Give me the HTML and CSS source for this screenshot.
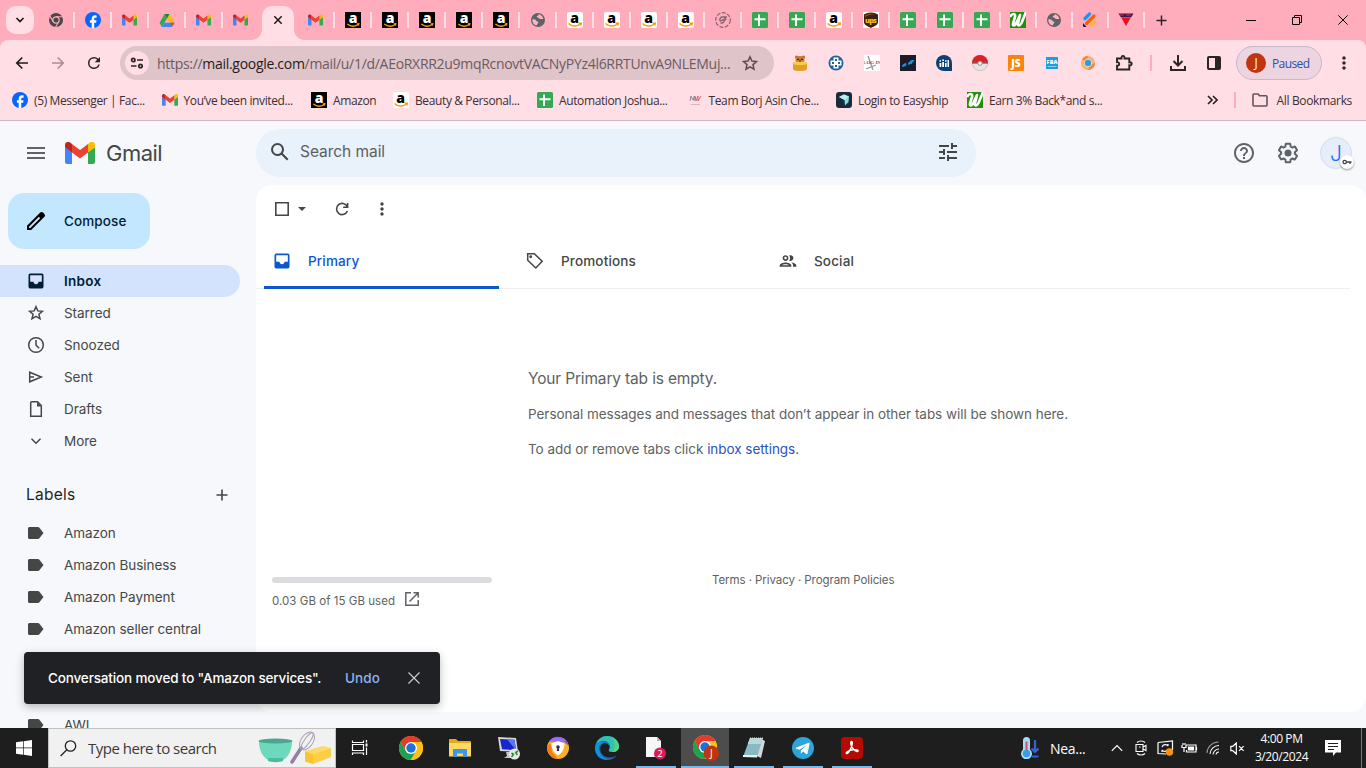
FILE: index.html
```html
<!DOCTYPE html>
<html lang="en">
<head>
    <meta charset="UTF-8">
    <meta name="viewport" content="width=device-width, initial-scale=1.0">
    <title>Gmail</title>
    <link rel="stylesheet" href="styles.css">
</head>
<body>

    <!-- Shared icons -->
    <svg class="defs" aria-hidden="true">
        <symbol id="gmail" viewBox="0 0 30 22">
            <path fill="#4285f4" d="M2 22h5V10L0 5v15c0 1.100.9 2 2 2z"/>
            <path fill="#34a853" d="M23 22h5c1.100 0 2-.9 2-2V5l-7 5z"/>
            <path fill="#fbbc04" d="M23 2v8.500l7-5.300V3c0-2.700-3-4.100-5.100-2.500z"/>
            <path fill="#ea4335" d="M7 10.500V2l8 6 8-6v8.500l-8 6z"/>
            <path fill="#c5221f" d="M0 3v2.200l7 5.300V2L5.100.5C3-1.100 0 .3 0 3z"/>
        </symbol>
        <symbol id="facebook" viewBox="0 0 16 16">
            <circle cx="8" cy="8" r="8" fill="#0866ff"/>
            <path fill="#fff" d="M6.700 16v-5.200H4.900V8.300h1.800V7.100c0-2.600 1.200-3.800 3.500-3.800.5 0 1 .1 1.400.2v2.200h-1c-1.100 0-1.400.5-1.400 1.400v1.200h2.300l-.4 2.500H9.200V16z"/>
        </symbol>
        <symbol id="chrome-grey" viewBox="0 0 16 16">
            <circle cx="8" cy="8" r="7" fill="#4a4649"/>
            <circle cx="8" cy="8" r="3.200" fill="none" stroke="#ffaebc" stroke-width="1.200"/>
            <path stroke="#ffaebc" stroke-width="1.100" d="M8 4.800h7M5.200 9.600L1.800 3.900M10.800 9.600L7.400 15.500"/>
        </symbol>
        <symbol id="chrome" viewBox="0 0 24 24">
            <circle cx="12" cy="12" r="12" fill="#fbc116"/>
            <path fill="#e33b2e" d="M1.600 6a12 12 0 0 1 20.800 0H12L6.800 15z"/>
            <path fill="#1da152" d="M1.600 6l5.200 9 5.200 3-1 6A12 12 0 0 1 1.600 6z"/>
            <path fill="#1da152" d="M6.800 15l10.400 0-5.600 9-3-2z"/>
            <path fill="#fbc116" d="M17.200 15L12 24a12 12 0 0 0 10.400-18H12z"/>
            <circle cx="12" cy="12" r="6" fill="#fff"/>
            <circle cx="12" cy="12" r="4.700" fill="#2070e0"/>
        </symbol>
        <symbol id="drive" viewBox="0 0 16 16">
            <path fill="#fbbc04" d="M5.600 2h4.800l5.100 8.800h-4.900z"/>
            <path fill="#34a853" d="M5.600 2L.5 10.800 2.900 15l5.200-8.700z"/>
            <path fill="#4285f4" d="M5.300 10.800h10.200L13.100 15H2.900z"/>
            <path fill="#ea4335" d="M10.600 10.800h4.900l-1.800 3z"/>
            <path fill="#188038" d="M5.600 2h4.800L8.100 6.300z"/>
        </symbol>
        <symbol id="amazon-dark" viewBox="0 0 16 16">
            <path fill="#000" d="M0 0h16v16H0z"/>
            <text x="8" y="11" fill="#fff" font-family="Open Sans" font-weight="800" font-size="14" text-anchor="middle">a</text>
            <path fill="none" stroke="#f90" stroke-width="1.300" d="M2.300 12c3.400 2.800 7.600 2.700 11 .5M11.800 11.800l2-.1-.4 2"/>
        </symbol>
        <symbol id="amazon-light" viewBox="0 0 16 16">
            <rect width="16" height="16" rx="2" fill="#fff"/>
            <text x="7.500" y="10.500" fill="#000" font-family="Open Sans" font-weight="800" font-size="14" text-anchor="middle">a</text>
            <path fill="none" stroke="#f90" stroke-width="1.400" d="M1.500 11.500c3.400 3.400 8.400 3.200 11.500.700M11.700 11.300l2.600-.1-.6 2.300"/>
        </symbol>
        <symbol id="globe" viewBox="0 0 16 16">
            <circle cx="8" cy="8" r="7" fill="#5f6368"/>
            <path fill="#ffb4c1" d="M2.300 7.500c2-.5 3.300.1 4 1.200.5.900 2 .7 2.100 1.700 0 .9-1.300 1-1.300 2.300l-1 .9C3.500 12.600 2.200 10.200 2.300 7.500zM8.600 2.300c.3 1-.6 1.500-1.600 1.800-.7.400-.1 1.300.8 1.500.9.100 1.200 1.400 2.500 1.500l3-.2c-.5-2.600-2.400-4.200-4.700-4.600z"/>
        </symbol>
        <symbol id="sheet" viewBox="0 0 16 16">
            <rect width="16" height="16" rx="1.500" fill="#34a853"/>
            <path fill="#fff" d="M6 2.500h2v3.800h5.500v2H8V14H6V8.300H2.500v-2H6z"/>
        </symbol>
        <symbol id="w-green" viewBox="0 0 16 16">
            <path fill="#1f8f0c" d="M0 0h16v16H0z"/>
            <path fill="none" stroke="#fff" stroke-width="2.600" stroke-linejoin="round" d="M0 5c2-4 6-4 5 0L3 11.500c-.7 2.500 1.500 2.500 3 0L10 3 8 11.500c-.6 2.700 2 2.500 3.500-.5L16 0"/>
        </symbol>
        <symbol id="caret" viewBox="0 0 10 10"><path fill="none" stroke="currentColor" stroke-width="1.700" d="M1.500 3L5 6.500 8.500 3"/></symbol>
        <symbol id="cross" viewBox="0 0 10 10"><path fill="none" stroke="currentColor" stroke-width="1.500" d="M1.300 1.300l7.400 7.400M8.700 1.300L1.300 8.700"/></symbol>
        <symbol id="cross-thin" viewBox="0 0 10 10"><path fill="none" stroke="currentColor" stroke-width="1" d="M.4.4l9.200 9.200M9.600.4L.4 9.600"/></symbol>
        <symbol id="plus" viewBox="0 0 12 12"><path fill="none" stroke="currentColor" stroke-width="1.600" d="M6 .5v11M.5 6h11"/></symbol>
        <symbol id="dots" viewBox="0 0 24 24"><path fill="currentColor" d="M12 8c1.100 0 2-.9 2-2s-.9-2-2-2-2 .9-2 2 .9 2 2 2zm0 2c-1.100 0-2 .9-2 2s.9 2 2 2 2-.9 2-2-.9-2-2-2zm0 6c-1.100 0-2 .9-2 2s.9 2 2 2 2-.9 2-2-.9-2-2-2z"/></symbol>
        <symbol id="reload" viewBox="0 0 24 24"><path fill="currentColor" d="M17.650 6.350A7.960 7.960 0 0 0 12 4a8 8 0 1 0 7.730 10h-2.080A6 6 0 1 1 12 6c1.660 0 3.140.69 4.220 1.780L13 11h7V4z"/></symbol>
        <symbol id="inbox" viewBox="0 0 24 24"><path fill="currentColor" fill-rule="evenodd" d="M19 3H5a2 2 0 0 0-2 2v14a2 2 0 0 0 2 2h14a2 2 0 0 0 2-2V5a2 2 0 0 0-2-2zm0 10h-4c0 1.660-1.350 3-3 3s-3-1.340-3-3H5V5h14z"/></symbol>
        <symbol id="label" viewBox="0 0 16 12"><path fill="currentColor" d="M1.500 0H10c.6 0 1 .2 1.400.7L15.500 6l-4.100 5.300c-.4.5-.8.700-1.400.7H1.500C.7 12 0 11.300 0 10.500v-9C0 .7.7 0 1.500 0z"/></symbol>
    </svg>

    <!-- Browser -->
    <div class="browser">
        <div class="tabstrip">
            <div class="tab-search"><svg width="10" height="10"><use href="#caret"/></svg></div>
            <div class="tabs left">
                <div class="tab"><svg><use href="#chrome-grey"/></svg></div>
                <div class="tab"><svg><use href="#facebook"/></svg></div>
                <div class="tab"><svg class="mail"><use href="#gmail"/></svg></div>
                <div class="tab"><svg><use href="#drive"/></svg></div>
                <div class="tab"><svg class="mail"><use href="#gmail"/></svg></div>
                <div class="tab last"><svg class="mail"><use href="#gmail"/></svg></div>
            </div>
            <div class="tab-active"><svg width="10" height="10"><use href="#cross"/></svg></div>
            <div class="tabs right">
                <div class="tab"><svg class="mail"><use href="#gmail"/></svg></div>
                <div class="tab"><svg><use href="#amazon-dark"/></svg></div>
                <div class="tab"><svg><use href="#amazon-dark"/></svg></div>
                <div class="tab"><svg><use href="#amazon-dark"/></svg></div>
                <div class="tab"><svg><use href="#amazon-dark"/></svg></div>
                <div class="tab"><svg><use href="#amazon-dark"/></svg></div>
                <div class="tab"><svg><use href="#globe"/></svg></div>
                <div class="tab"><svg><use href="#amazon-light"/></svg></div>
                <div class="tab"><svg><use href="#amazon-light"/></svg></div>
                <div class="tab"><svg><use href="#amazon-light"/></svg></div>
                <div class="tab"><svg><use href="#amazon-light"/></svg></div>
                <div class="tab"><svg viewBox="0 0 16 16" fill="none" stroke="#8a6670"><circle cx="8" cy="8" r="7.300" stroke-width="1.200" stroke-dasharray="4 1.500"/><path stroke-width="1.500" d="M12 5H7.500C5.500 5 4.500 7 5 8.200c.7 1 3 .5 3.500-1.200M10.500 5L9 9.500c-.5 1.300-2 1.800-3.500 1.200M9.500 7.500h2"/></svg></div>
                <div class="tab"><svg><use href="#sheet"/></svg></div>
                <div class="tab"><svg><use href="#sheet"/></svg></div>
                <div class="tab"><svg><use href="#amazon-light"/></svg></div>
                <div class="tab"><svg viewBox="0 0 16 16"><path fill="#fff" d="M0 0h16v16H0z"/><path fill="#3f1d0b" d="M1 2.500C5-.3 11-.3 15 2.500V10c0 3-3.500 4-7 6-3.500-2-7-3-7-6z"/><path fill="#8a5a14" d="M2 3.300C6 1 10 1.500 14 2.500 9 2 5 3 2 5z"/><text x="8" y="11" fill="#fdb714" font-family="Open Sans" font-weight="800" font-size="7.500" text-anchor="middle" textLength="12">ups</text></svg></div>
                <div class="tab"><svg><use href="#sheet"/></svg></div>
                <div class="tab"><svg><use href="#sheet"/></svg></div>
                <div class="tab"><svg><use href="#sheet"/></svg></div>
                <div class="tab small"><svg><use href="#w-green"/></svg></div>
                <div class="tab small"><svg><use href="#globe"/></svg></div>
                <div class="tab small"><svg viewBox="0 0 16 16" fill="none" stroke-linecap="round" stroke-width="3.200"><path stroke="#0a99ff" d="M3 6.500L7.500 2"/><path stroke="#ff6100" d="M4.500 11.500L12 4"/><path stroke="#ffb629" d="M9.500 13l3-3"/><path fill="#0a1551" stroke="none" d="M1 11l3.500 4H2a1 1 0 0 1-1-1z"/></svg></div>
                <div class="tab small"><svg viewBox="0 0 16 16"><path fill="#3a1650" d="M.5 1.500h15L13 5.500H3z"/><path fill="#e8283a" d="M2 2.500h4v1H2zM8 2.500h5v1H8z"/><path fill="#e8101f" d="M3.500 6h9L8 14z"/></svg></div>
            </div>
            <div class="new-tab"><svg width="11" height="11"><use href="#plus"/></svg></div>
            <div class="window-buttons">
                <svg width="10" height="10" viewBox="0 0 10 10"><path stroke="#000" d="M0 5.500h10"/></svg>
                <svg width="10" height="10" viewBox="0 0 10 10" fill="none" stroke="#000"><path d="M.5 2.500h7v7h-7zM2.500 2.500v-2h7v7h-2"/></svg>
                <svg width="10" height="10"><use href="#cross-thin"/></svg>
            </div>
        </div>

        <div class="chrome-bars">
            <div class="toolbar">
                <div class="nav-buttons">
                    <svg width="14" height="14" viewBox="0 0 14 14" fill="none" stroke="#1f1a1c" stroke-width="1.700"><path d="M13 7H2M7.300 1.500L1.800 7l5.500 5.500"/></svg>
                    <svg width="14" height="14" viewBox="0 0 14 14" fill="none" stroke="#a98f96" stroke-width="1.700"><path d="M1 7h11M6.700 1.500L12.200 7l-5.500 5.500"/></svg>
                    <svg width="18" height="18" class="dark"><use href="#reload"/></svg>
                </div>
                <div class="omnibox">
                    <div class="site-info"><svg width="14" height="12" viewBox="0 0 14 12" fill="none" stroke="#2a2426" stroke-width="1.700"><circle cx="3.300" cy="3" r="1.700"/><path d="M7 3h6M1 9h5.500"/><circle cx="10.500" cy="9" r="1.700"/></svg></div>
                    <div class="url">https://<b>mail.google.com</b>/mail/u/1/d/AEoRXRR2u9mqRcnovtVACNyPYz4l6RRTUnvA9NLEMuj...</div>
                    <svg class="star" width="16" height="16" viewBox="0 0 16 16" fill="none" stroke="#5b4d51" stroke-width="1.500"><path d="M8 1.800l1.900 4.300 4.600.4-3.500 3.100 1 4.600-4-2.400-4 2.400 1-4.600L1.500 6.500l4.600-.4z"/></svg>
                </div>
                <div class="extensions">
                    <div class="ext"><svg viewBox="0 0 16 16"><circle cx="4.500" cy="2" r="1.500" fill="#b5622a"/><circle cx="11.500" cy="2" r="1.500" fill="#b5622a"/><rect x="3.500" y="1" width="9" height="8" rx="4" fill="#cf7a36"/><path fill="#e0a024" d="M1 8h14v6c0 2.700-14 2.700-14 0z"/><ellipse cx="8" cy="8.300" rx="7.800" ry="1.800" fill="#f6cc48"/><circle cx="6" cy="4.200" r=".8"/><circle cx="10" cy="4.200" r=".8"/><path d="M7 5.500h2L8 7z"/></svg></div>
                    <div class="ext"><svg viewBox="0 0 16 16"><circle cx="8" cy="8" r="7.500" fill="#23629b"/><path fill="#fff" d="M5.500 2.500h5v3h3v5h-3v3h-5v-3h-3v-5h3z"/><path fill="#23629b" d="M7 4h2v2H7zM4 7h2v2H4zM10 7h2v2h-2zM7 10h2v2H7z"/></svg></div>
                    <div class="ext"><svg viewBox="0 0 16 16"><path fill="#fff" d="M0 0h16v16H0z"/><path stroke="#999" stroke-width="1.300" d="M4 1l5 14M2 14l10-4"/><text x="8" y="8.500" fill="#a8444a" font-family="Liberation Serif" font-weight="bold" font-size="5" text-anchor="middle">LOG IN</text></svg></div>
                    <div class="ext"><svg viewBox="0 0 16 16"><path fill="#1b1c26" d="M0 0h16v16H0z"/><path fill="#1695e8" d="M2 12c0-2 1.500-3.500 4-4l.5 1.500c-.5 1.500-2 2.500-4.500 2.500zM8 8l3.500-3h3l-3 4-3.500.7z"/></svg></div>
                    <div class="ext"><svg viewBox="0 0 16 16"><circle cx="8" cy="8" r="8" fill="#0c3f73"/><path fill="#0c3f73" d="M9 9h7v7H9z"/><path fill="#fff" d="M3.500 8h1.800v4H3.500zM6.200 7H8v5H6.200zM9 8h1.600v4H9zM11.500 5h1.500v7h-1.500zM3.500 5.300H5v1.400H3.500zM6.200 4.500H8V6H6.200zM9 5.300h1.600v1.400H9z"/></svg></div>
                    <div class="ext"><svg viewBox="0 0 16 16"><circle cx="8" cy="8" r="7.700" fill="#e4e4e4" stroke="#b5aaaa" stroke-width=".6"/><path fill="#dd1f26" d="M0 8a8 8 0 0 1 16 0z"/><path fill="#777" d="M0 7.600h16v1.200H0z"/><circle cx="8" cy="8.300" r="2.500" fill="#999"/><circle cx="8" cy="8.300" r="1.500" fill="#fff"/></svg></div>
                    <div class="ext"><svg viewBox="0 0 16 16"><rect width="16" height="16" rx="1" fill="#fd840b"/><text x="8" y="12" fill="#fff" font-family="Open Sans" font-weight="800" font-size="10" text-anchor="middle">JS</text></svg></div>
                    <div class="ext"><svg viewBox="0 0 16 16"><path fill="#1b9fe0" d="M2 2h12v12H2z"/><text x="8" y="9" fill="#fff" font-family="Open Sans" font-weight="800" font-size="5.500" text-anchor="middle" textLength="11">FBA</text><path stroke="#8fd0f2" d="M3.500 11.500h9"/></svg></div>
                    <div class="ext"><svg viewBox="0 0 16 16"><circle cx="8" cy="8" r="7" fill="#f6b273"/><path fill="#ee8a3a" d="M8 1a7 7 0 0 0-6 3l4 3zM15 8a7 7 0 0 1-7 7l2-5z"/><circle cx="8" cy="8" r="4" fill="#fbe0c4"/><circle cx="8" cy="8" r="3.200" fill="#2f9be0"/></svg></div>
                    <div class="ext"><svg class="puzzle" viewBox="0 0 18 18" fill="none" stroke="#2a2426" stroke-width="1.900"><path d="M2 4.500h4.500C6 1 10 1 9.500 4.500h4.800v3.800c3.200-.5 3.200 3.500 0 3v4.200H2v-3.700c3 .2 3-4 0-3.700z"/></svg></div>
                </div>
                <div class="divider"></div>
                <div class="ext"><svg viewBox="0 0 16 16" fill="none" stroke="#2a2426" stroke-width="2"><path d="M8 0v10M3.500 6L8 10.500 12.500 6M1 11v4h14v-4"/></svg></div>
                <div class="ext"><svg viewBox="0 0 16 16"><rect x="2" y="2" width="12" height="12" rx="1" fill="none" stroke="#2a2426" stroke-width="2"/><path fill="#2a2426" d="M9 2h5v12H9z"/></svg></div>
                <div class="profile"><span class="avatar-small">J</span><span class="paused">Paused</span></div>
                <svg class="dark menu-dots" width="20" height="20"><use href="#dots"/></svg>
            </div>

            <div class="bookmarks">
                <div class="bookmark"><svg><use href="#facebook"/></svg><span>(5) Messenger | Fac...</span></div>
                <div class="bookmark"><svg><use href="#gmail"/></svg><span>You’ve been invited...</span></div>
                <div class="bookmark w82"><svg><use href="#amazon-dark"/></svg><span>Amazon</span></div>
                <div class="bookmark w144"><svg><use href="#amazon-light"/></svg><span>Beauty &amp; Personal...</span></div>
                <div class="bookmark"><svg><use href="#sheet"/></svg><span>Automation Joshua...</span></div>
                <div class="bookmark"><svg viewBox="0 0 16 16"><path fill="none" stroke="#8d8494" d="M3 9l1-5 2 4 1.500-4L7 9"/><path fill="none" stroke="#d9606c" d="M8 4l1 5 2-5v5l3-5"/><path stroke="#d8b8c0" d="M4 12.500h9"/></svg><span>Team Borj Asin Che...</span></div>
                <div class="bookmark w131"><svg viewBox="0 0 16 16"><rect width="16" height="16" rx="3" fill="#1c2b39"/><path fill="#7fe0dc" d="M3 5l5-2.500 5 2L12.500 10 9 13.500 8.500 8z"/><path fill="#b9f0ee" d="M3 5l5-2.500 5 2L8.500 8z"/></svg><span>Login to Easyship</span></div>
                <div class="bookmark"><svg><use href="#w-green"/></svg><span>Earn 3% Back*and s...</span></div>
                <div class="bookmarks-end">
                    <svg width="11" height="10" viewBox="0 0 11 10" fill="none" stroke="#2a2426" stroke-width="1.700"><path d="M1 1l4 4-4 4M6 1l4 4-4 4"/></svg>
                    <div class="divider"></div>
                    <svg width="16" height="14" viewBox="0 0 16 14" fill="none" stroke="#5f5558" stroke-width="1.600"><path d="M1 2c0-.6.400-1 1-1h4l1.500 1.800H14c.6 0 1 .4 1 1V12c0 .6-.4 1-1 1H2c-.6 0-1-.4-1-1z"/></svg>
                    <span class="all-bookmarks">All Bookmarks</span>
                </div>
            </div>
        </div>
    </div>

    <!-- Gmail -->
    <div class="gmail">
        <header>
            <div class="brand">
                <svg class="hamburger" width="18" height="12" viewBox="0 0 18 12"><path fill="#5f6368" d="M0 0h18v2H0zM0 5h18v2H0zM0 10h18v2H0z"/></svg>
                <svg width="30" height="22"><use href="#gmail"/></svg>
                <span class="brand-name">Gmail</span>
            </div>
            <div class="search">
                <svg width="24" height="24" viewBox="0 0 24 24"><path fill="#444746" d="M20.490 19l-5.730-5.730C15.530 12.200 16 10.910 16 9.500A6.500 6.500 0 1 0 9.500 16c1.410 0 2.700-.47 3.770-1.240L19 20.490 20.490 19zM5 9.500C5 7.010 7.010 5 9.500 5S14 7.010 14 9.500 11.990 14 9.500 14 5 11.990 5 9.500z"/></svg>
                <span class="search-text">Search mail</span>
                <svg width="24" height="24" viewBox="0 0 24 24"><path fill="#444746" d="M3 17v2h6v-2H3zM3 5v2h10V5H3zm10 16v-2h8v-2h-8v-2h-2v6h2zM7 9v2H3v2h4v2h2V9H7zm14 4v-2H11v2h10zm-6-4h2V7h4V5h-4V3h-2v6z"/></svg>
            </div>
            <div class="header-icons">
                <svg width="24" height="24" viewBox="0 0 24 24"><path fill="#5f6368" d="M11 18h2v-2h-2v2zm1-16C6.480 2 2 6.480 2 12s4.480 10 10 10 10-4.480 10-10S17.520 2 12 2zm0 18c-4.410 0-8-3.590-8-8s3.590-8 8-8 8 3.590 8 8-3.590 8-8 8zm0-14c-2.210 0-4 1.790-4 4h2c0-1.100.9-2 2-2s2 .9 2 2c0 2-3 1.750-3 5h2c0-2.250 3-2.500 3-5 0-2.210-1.790-4-4-4z"/></svg>
                <svg width="24" height="24" viewBox="0 0 24 24" fill="#5f6368"><path d="M13.850 22.250h-3.700c-.74 0-1.360-.54-1.450-1.270l-.27-1.890c-.27-.14-.53-.29-.79-.46l-1.800.72c-.7.26-1.470-.03-1.810-.65L2.200 15.530c-.35-.66-.2-1.440.36-1.880l1.530-1.190c-.01-.15-.02-.3-.02-.46 0-.15.01-.31.02-.46l-1.520-1.190c-.59-.45-.74-1.260-.37-1.880l1.850-3.190c.34-.62 1.110-.9 1.790-.63l1.810.73c.26-.17.52-.32.78-.46l.27-1.910c.09-.7.71-1.250 1.440-1.250h3.700c.74 0 1.360.54 1.450 1.270l.27 1.890c.27.14.53.29.79.46l1.800-.72c.71-.26 1.480.03 1.820.65l1.840 3.180c.36.66.2 1.440-.36 1.880l-1.520 1.190c.01.15.02.3.02.46s-.01.31-.02.46l1.520 1.190c.56.45.72 1.230.37 1.860l-1.860 3.220c-.34.62-1.110.9-1.800.63l-1.800-.72c-.26.17-.52.32-.78.46l-.27 1.910c-.1.68-.72 1.220-1.460 1.220zm-3.230-2h2.760l.37-2.550.53-.22c.44-.18.88-.44 1.340-.78l.45-.34 2.380.96 1.380-2.400-2.030-1.580.07-.56c.03-.26.06-.51.06-.78s-.03-.53-.06-.78l-.07-.56 2.030-1.580-1.390-2.400-2.390.96-.45-.35c-.42-.32-.87-.58-1.330-.77l-.52-.22-.37-2.550h-2.760l-.37 2.550-.53.21c-.44.19-.88.44-1.340.79l-.45.33-2.380-.95-1.390 2.390 2.030 1.580-.07.56a7 7 0 0 0-.06.79c0 .26.02.53.06.78l.07.56-2.030 1.580 1.380 2.400 2.390-.96.45.35c.43.33.86.58 1.330.77l.53.22.38 2.550z"/><circle cx="12" cy="12" r="3.500"/></svg>
                <div class="account">J<span class="key"><svg width="10" height="6" viewBox="0 0 10 6"><path fill="none" stroke="#444746" stroke-width="1.300" d="M4.500 3h5M8 3v2"/><circle cx="2.700" cy="3" r="1.700" fill="none" stroke="#444746" stroke-width="1.300"/></svg></span></div>
            </div>
        </header>

        <div class="content">
            <nav class="sidebar">
                <div class="compose">
                    <svg width="24" height="24" viewBox="0 0 24 24"><path d="M20.410 4.940l-1.350-1.350c-.78-.78-2.050-.78-2.830 0L3 16.820V21h4.180L20.410 7.770c.79-.78.79-2.050 0-2.830zM6.350 19H5v-1.350l9.820-9.820 1.350 1.350z"/></svg>
                    <span>Compose</span>
                </div>
                <div class="nav-item selected"><svg width="20" height="20"><use href="#inbox"/></svg><span>Inbox</span></div>
                <div class="nav-item"><svg width="20" height="20" viewBox="0 0 20 20" fill="none" stroke="#444746" stroke-width="1.500"><path d="M10 3.700l1.800 4.200 4.600.4-3.500 3 1.100 4.500-4-2.400-4 2.400 1.100-4.500-3.500-3 4.600-.4z"/></svg><span>Starred</span></div>
                <div class="nav-item"><svg width="20" height="20" viewBox="0 0 20 20" fill="none" stroke="#444746" stroke-width="1.500"><circle cx="10" cy="10" r="7.300"/><path d="M10 5v5.300l3.200 3"/></svg><span>Snoozed</span></div>
                <div class="nav-item"><svg width="20" height="20" viewBox="0 0 20 20" fill="none" stroke="#444746" stroke-width="1.500"><path d="M3.700 5.200L15.300 10 3.700 14.800zM3.700 10H8"/></svg><span>Sent</span></div>
                <div class="nav-item"><svg width="20" height="20" viewBox="0 0 20 20" fill="none" stroke="#444746" stroke-width="1.500"><path d="M5.600 2.800h6l3.700 3.700v10.700H4.700V3.700c0-.5.4-.9.9-.9z"/><path fill="#444746" stroke="none" d="M11 3l4.500 4.500H11z"/></svg><span>Drafts</span></div>
                <div class="nav-item"><svg width="20" height="20" viewBox="0 0 20 20" fill="none" stroke="#444746" stroke-width="1.500"><path d="M5.500 7.700l4.500 4.500 4.500-4.500"/></svg><span>More</span></div>

                <div class="labels-title"><span>Labels</span><svg width="12" height="12"><use href="#plus"/></svg></div>
                <div class="nav-item label"><svg width="16" height="12"><use href="#label"/></svg><span>Amazon</span></div>
                <div class="nav-item label"><svg width="16" height="12"><use href="#label"/></svg><span>Amazon Business</span></div>
                <div class="nav-item label"><svg width="16" height="12"><use href="#label"/></svg><span>Amazon Payment</span></div>
                <div class="nav-item label"><svg width="16" height="12"><use href="#label"/></svg><span>Amazon seller central</span></div>
                <div class="nav-item label"></div>
                <div class="nav-item label"></div>
                <div class="nav-item label"><svg width="16" height="12"><use href="#label"/></svg><span>AWI</span></div>
            </nav>

            <main>
                <div class="mail-toolbar">
                    <svg width="14" height="14" viewBox="0 0 14 14"><path fill="none" stroke="#444746" stroke-width="1.600" d="M.8.8h12.400v12.400H.8z"/></svg>
                    <svg class="drop" width="8" height="4" viewBox="0 0 8 4"><path fill="#444746" d="M0 0h8L4 4z"/></svg>
                    <svg class="refresh" width="20" height="20" viewBox="0 0 20 20" fill="none" stroke="#444746" stroke-width="1.600"><path d="M15.200 7.500A5.600 5.600 0 1 0 15.400 12M15.600 4v4.200h-4.400"/></svg>
                    <svg width="20" height="20"><use href="#dots"/></svg>
                </div>
                <div class="categories">
                    <div class="category current"><svg width="20" height="20"><use href="#inbox"/></svg><span>Primary</span></div>
                    <div class="category"><svg width="20" height="20" viewBox="0 0 20 20" fill="none" stroke="#444746" stroke-width="1.500"><path d="M2.700 2.700h6.600l7.900 7.600-6.400 6.700-8.100-7.800z"/><circle cx="5.700" cy="5.700" r=".7"/></svg><span>Promotions</span></div>
                    <div class="category"><svg width="20" height="20" viewBox="0 0 24 24"><path fill="#444746" d="M9 13.750c-2.340 0-7 1.170-7 3.500V19h14v-1.750c0-2.330-4.660-3.500-7-3.500zM4.340 17c.84-.58 2.870-1.250 4.660-1.250s3.820.67 4.660 1.250H4.340zM9 12c1.930 0 3.500-1.570 3.500-3.500S10.930 5 9 5 5.500 6.570 5.500 8.500 7.070 12 9 12zm0-5c.83 0 1.500.67 1.500 1.500S9.830 10 9 10s-1.500-.67-1.500-1.500S8.170 7 9 7zm7.040 6.810c1.160.84 1.960 1.960 1.960 3.440V19h4v-1.750c0-2.020-3.500-3.170-5.960-3.440zM15 12c1.930 0 3.500-1.570 3.500-3.500S16.930 5 15 5c-.54 0-1.040.13-1.500.35.63.89 1 1.980 1 3.150s-.37 2.260-1 3.150c.46.22.96.35 1.500.35z"/></svg><span>Social</span></div>
                </div>
                <div class="empty">
                    <p class="empty-title">Your Primary tab is empty.</p>
                    <p class="empty-desc">Personal messages and messages that don’t appear in other tabs will be shown here.</p>
                    <p class="empty-hint">To add or remove tabs click <a>inbox settings</a>.</p>
                </div>
                <footer>
                    <div class="storage">
                        <div class="bar"></div>
                        <div class="quota"><span>0.03 GB of 15 GB used</span><svg width="14" height="14" viewBox="0 0 14 14" fill="none" stroke="#5f6368" stroke-width="1.500"><path d="M6 .8H.8v12.400h12.400V8M8.500.8h4.700v4.700M13 1L4.500 9.500"/></svg></div>
                    </div>
                    <div class="policies">Terms · Privacy · Program Policies</div>
                </footer>
            </main>
        </div>

        <div class="toast">
            <span class="toast-text">Conversation moved to "Amazon services".</span>
            <span class="undo">Undo</span>
            <svg width="12" height="12"><use href="#cross-thin"/></svg>
        </div>
    </div>

    <!-- Windows taskbar -->
    <div class="taskbar">
        <div class="start"><svg width="16" height="16" viewBox="0 0 16 16"><path fill="#fff" d="M0 2.300L7 1.300v6.300H0zM7.700 1.200L16 0v7.600H7.700zM0 8.300h7v6.400l-7-1zM7.700 8.300H16V16l-8.300-1.200z"/></svg></div>
        <div class="task-search">
            <svg width="17" height="17" viewBox="0 0 17 17" fill="none" stroke="#222" stroke-width="1.300"><circle cx="10.500" cy="6" r="5.200"/><path d="M6.800 9.800L.6 16"/></svg>
            <span>Type here to search</span>
            <svg class="highlight" width="74" height="34" viewBox="0 0 74 34">
                <path fill="#6ed8bd" d="M1 10c0 10 4 16 9 19h15c5-3 9-9 9-19z"/>
                <path fill="#4dbb9f" d="M10 27h15v3c-3 1.500-12 1.500-15 0z"/>
                <ellipse cx="17.500" cy="10" rx="17" ry="2.500" fill="#4aa78f"/>
                <path stroke="#8f80a8" stroke-width="3.500" stroke-linecap="round" d="M34 31l9-14"/>
                <g fill="none" stroke="#a9a3b8"><ellipse cx="49" cy="10" rx="6" ry="10" transform="rotate(35 49 10)"/><ellipse cx="49" cy="10" rx="2.700" ry="10" transform="rotate(35 49 10)"/></g>
                <path fill="#fddb62" d="M47 20l18-5 8 2-18 6z"/>
                <path fill="#f9c632" d="M47 20l8 3v10l-7-2c-1-.3-1-1-1-2z"/>
                <path fill="#fbce45" d="M55 23l18-6v8c0 1-1 1.500-2 2l-16 6z"/>
            </svg>
        </div>
        <div class="task first"><svg width="18" height="18" viewBox="0 0 18 18" fill="none" stroke="#fff" stroke-width="1.200"><path d="M1.500 1.500v2h11v-2M1.500 5.500h11v6h-11zM1.500 16v-2h11v2M15.500 1v2.500M15.500 8.500V16"/><path fill="#fff" stroke="none" d="M14.500 4.500h2v3h-2z"/></svg></div>
        <div class="task"><svg width="24" height="24"><use href="#chrome"/></svg></div>
        <div class="task"><svg width="22" height="20" viewBox="0 0 22 20"><path fill="#e8a917" d="M0 2c0-.6.400-1 1-1h6l2 2h12c.6 0 1 .4 1 1v4H0z"/><path fill="#fdd868" d="M0 5h22v13.500H0z"/><path fill="#3e98e0" d="M4 19v-7c0-.6.400-1 1-1h12c.6 0 1 .4 1 1v7h-4v-3.500H8V19z"/></svg></div>
        <div class="task"><svg width="24" height="24" viewBox="0 0 24 24"><path fill="#d5d8da" d="M1 1l18 1 2 14-18-1z"/><path fill="#1526ce" d="M3 3l14.500.8 1.700 10.500L5 13.200z"/><path fill="#5d75e8" d="M10 3.300l7.500.5 1.700 10.500z"/><path fill="#c6c9cb" d="M9 16h6l1 4 3 2H7l3-2z"/><circle cx="17.500" cy="18" r="5.500" fill="#e6ebe6"/><path fill="none" stroke="#2c8c3b" stroke-width="1.600" d="M14.500 17l2 1.500-2 2.500M21 15l-2.200 1.500 1.500 2.500"/></svg></div>
        <div class="task"><svg width="24" height="24" viewBox="0 0 24 24"><circle cx="12" cy="12" r="11" fill="#fbb123"/><path fill="#7f52f0" d="M3 5.500A11 11 0 0 1 22.800 10L17 5z"/><path fill="#9c6bff" d="M3 5.500C7 0 16 0 20 4.500l-3 2-9-1z"/><path fill="#f57b18" d="M1.500 9C0 17 6 23 12 23l-6-7-1-8z"/><path fill="#fff" d="M12 5l6.500 2.500c0 5-2 9-6.500 12-4.500-3-6.500-7-6.500-12z"/><circle cx="12" cy="11" r="1.800" fill="#352b56"/><path fill="#352b56" d="M11.200 11h1.600l.4 4h-2.400z"/></svg></div>
        <div class="task"><svg width="24" height="24" viewBox="0 0 24 24"><path fill="#1378cb" d="M0 11C1 4 6 0 12 0s12 4 12 10c0 4-3 6-7 6-3 0-4-1-3-2.500 2-3-1-6.500-5-6.500-5 0-8 2-9 4z"/><path fill="#35c1b0" d="M1 8C3 3 7 0 12 0c7 0 12 5 12 10.500 0 3.500-3 5.500-6.500 5.500-3 0-4.200-1-3.300-2.500C17 9 13 4.500 8.500 4.700 5 4.800 2.500 6 1 8z"/><path fill="#57d37d" d="M17 1.200c4 1.700 7 5.500 7 9.300 0 3.500-3 5.500-6.500 5.500 3-4 3-10-.5-14.800z"/><path fill="#1b67b5" d="M0 12c0-4 4-6 9-5-3 1.500-4 4-3.700 7 .4 5 5.200 7.500 9.700 7.500 3 0 5-.9 7-2.500-2 3-5.500 5-10 5C5 24 0 19 0 12z"/><path fill="#1292d8" d="M0 12c0-5 5-7 9-5-4-.3-6 4-4.700 8 1.200 4.500 5 7.500 8.700 9C5 24 0 19 0 12z"/></svg></div>
        <div class="task open"><svg width="20" height="24" viewBox="1 0 20 24"><path fill="#f7f7f7" d="M1 1h11l4 4v16H1z"/><path fill="#bbb" d="M12 1v4h4z"/><circle cx="15" cy="17.500" r="6" fill="#da1b55"/><text x="15" y="21" fill="#fff" font-family="Open Sans" font-size="9.500" text-anchor="middle">2</text></svg></div>
        <div class="task active"><svg width="26" height="26" viewBox="0 0 26 26"><use href="#chrome" width="24" height="24"/><circle cx="18.300" cy="18.300" r="7.700" fill="#c0350f"/><text x="18.300" y="22" fill="#fff" font-family="Open Sans" font-size="10" text-anchor="middle">J</text></svg></div>
        <div class="task open"><svg width="24" height="24" viewBox="0 0 24 24"><path fill="#d4d9d8" d="M19 3l4 2-4 17-4-2z"/><path fill="#89bac3" d="M8 2h13l-6 19H1z"/><path fill="#b4dadf" d="M8 2h13l-2 6H5.700z"/><path fill="#e9f1f0" d="M1 19h14.500l-.5 2.500L1 21z"/><path stroke="#ddd" stroke-dasharray="1 1" d="M8 2h13"/></svg></div>
        <div class="task open"><svg width="22" height="22" viewBox="0 0 22 22"><circle cx="11" cy="11" r="11" fill="#2ca5dc"/><path fill="#fff" d="M4 10.800l12.700-5c.6-.2 1.100.2.900 1L15.500 16.500c-.2.700-.6.900-1.200.5l-3.200-2.400-1.600 1.600c-.4.400-.7.200-.7-.2l.1-2.500 6-5.500-7.500 4.700-3.200-1c-.7-.2-.7-.7-.2-.9z"/></svg></div>
        <div class="task open"><svg width="22" height="22" viewBox="0 0 22 22"><rect width="22" height="22" rx="4" fill="#b30b00"/><path fill="none" stroke="#fff" stroke-width="1.500" d="M10.300 4.500c1.500-.3 1.200 3-.3 6.500s-3.500 6-4.500 5.500c-1.300-1 3-3.300 6.500-3.700s5.500.3 5 1.300c-.6 1.200-4-1-5.500-3.200S9 5 10.300 4.500z"/></svg></div>

        <div class="tray">
            <svg width="20" height="22" viewBox="0 0 20 22"><path fill="#a6dcf5" d="M3 3.500a3.500 3.500 0 0 1 7 0v9a5.500 5.500 0 1 1-7 0z"/><path fill="#e2455c" d="M5.500 4.500h2v10h-2z"/><circle cx="6.500" cy="16.500" r="3.700" fill="#3b9be8"/><path fill="none" stroke="#3363dd" stroke-width="2.200" d="M15 3v12M11.500 11.500L15 15l3.500-3.500M11.500 19.500h7"/></svg>
            <span class="weather-text">Nea...</span>
            <div class="tray-icon"><svg width="12" height="8" viewBox="0 0 12 8" fill="none" stroke="#fff" stroke-width="1.200"><path d="M.8 6.800L6 1.500l5.200 5.300"/></svg></div>
            <div class="tray-icon"><svg width="12" height="16" viewBox="0 0 12 16" fill="none" stroke="#fff" stroke-width="1.100"><path d="M2 2.500C4 .5 8 .5 10 2.500M2 13.500c2 2 6 2 8 0M1 4.500h7v7H1zM8 7l3-1.500v5L8 9M4 7h1.500"/></svg></div>
            <div class="tray-icon"><svg width="17" height="16" viewBox="0 0 17 16" fill="none" stroke="#fff" stroke-width="1.200"><path d="M1 2.500L15.500 1v9M1 2.500v11l8 .5M5 7c1-3 5-3 6-1V4M11 9c-1 3-5 3-6 1v2"/><circle cx="12.500" cy="12" r="3.700" fill="#ff9310" stroke="none"/></svg></div>
            <div class="tray-icon"><svg width="17" height="12" viewBox="0 0 17 12" fill="none" stroke="#fff" stroke-width="1.200"><path d="M5 3h10v7H5.500V8M15.500 5v3M1 3v2.500h4V3M2 1v2M4 1v2M3 5.500V10"/><path fill="#fff" d="M7.500 5h5v3h-5z"/></svg></div>
            <div class="tray-icon"><svg width="14" height="14" viewBox="0 0 14 14" fill="none" stroke="#fff" stroke-width="1.100"><path stroke="#999" d="M1 12A11.500 11.500 0 0 1 12.500 1"/><path d="M4 13a9 9 0 0 1 9-8.500M7 13.500a6 6 0 0 1 6-5.500M10 13.500a3 3 0 0 1 3-2.500"/></svg></div>
            <div class="tray-icon"><svg width="15" height="13" viewBox="0 0 15 13" fill="none" stroke="#fff" stroke-width="1.200"><path d="M.8 4.300h2L6.300 1v11L2.800 8.700h-2zM9 4.200l4.600 4.600M13.600 4.200L9 8.800"/></svg></div>
            <div class="clock"><span>4:00 PM</span><span>3/20/2024</span></div>
            <svg class="action" width="16" height="16" viewBox="0 0 16 16"><path fill="#fff" d="M0 0h16v12.500h-5L8 16v-3.500H0z"/><path stroke="#1e1e1e" d="M3 3.500h10M3 6.500h10M3 9.500h6"/></svg>
            <div class="show-desktop"></div>
        </div>
    </div>

</body>
</html>
```
FILE: styles.css
```css
* {
    box-sizing: border-box;
}
body {
    margin: 0;
    width: 1366px;
    height: 768px;
    overflow: hidden;
    display: flex;
    flex-direction: column;
    font-family: Inter, Roboto, sans-serif;
    font-size: 13.5px;
    color: #444746;
    white-space: nowrap;
}
svg {
    display: block;
    flex: none;
}
.defs {
    display: none;
}
.dark {
    color: #2a2426;
}

/* Browser */
.browser {
    flex: 0 0 121px;
    background: #ffadbc;
    font-family: "Open Sans", "Noto Sans", sans-serif;
    font-size: 12px;
    color: #3a2f32;
}
.tabstrip {
    display: flex;
    height: 40px;
}
.tab-search {
    width: 28px;
    height: 28px;
    margin: 6px 4px 0 6px;
    border-radius: 10px;
    background: #ffdfe5;
    color: #1f1a1c;
    display: flex;
    align-items: center;
    justify-content: center;
}
.tabs {
    display: flex;
    align-items: center;
}
.left {
    width: 224px;
}
.right {
    width: 847px;
    margin-left: 4px;
}
.tab {
    flex: 0 0 37px;
    display: flex;
    align-items: center;
    justify-content: center;
    height: 16px;
    border-right: 2px solid #ffdfe5;
}
.tab.small {
    flex-basis: 36px;
}
.tab.last {
    border-color: transparent;
}
.tab svg {
    width: 16px;
    height: 16px;
}
.tab svg.mail {
    width: 15px;
}
.tab-active {
    width: 32px;
    height: 34px;
    margin-top: 6px;
    border-radius: 10px 10px 0 0;
    background: #ffdfe5;
    color: #1f1a1c;
    display: flex;
    justify-content: center;
    padding-top: 9px;
    position: relative;
}
.tab-active::before, .tab-active::after {
    content: "";
    position: absolute;
    bottom: 0;
    width: 10px;
    height: 10px;
}
.tab-active::before {
    right: 100%;
    background: radial-gradient(circle at 0 0, transparent 9.500px, #ffdfe5 10px);
}
.tab-active::after {
    left: 100%;
    background: radial-gradient(circle at 100% 0, transparent 9.500px, #ffdfe5 10px);
}
.new-tab {
    padding: 15px 0 0 11px;
    color: #2a2426;
}
.window-buttons {
    margin-left: auto;
    display: flex;
    gap: 36px;
    padding: 15px 18px 0 0;
    color: #000;
}
.chrome-bars {
    height: 81px;
    background: #ffdfe5;
    border-radius: 8px 8px 0 0;
    border-bottom: 1px solid #d0b6bf;
}
.toolbar {
    display: flex;
    align-items: center;
    height: 46px;
}
.nav-buttons {
    width: 120px;
    padding-left: 15px;
    display: flex;
    align-items: center;
    gap: 22px;
}
.nav-buttons svg:last-child {
    margin-left: -2px;
}
.omnibox {
    width: 654px;
    height: 34px;
    border-radius: 17px;
    background: #dfc4ca;
    display: flex;
    align-items: center;
    padding: 0 16px 0 5px;
}
.site-info {
    width: 24px;
    height: 24px;
    border-radius: 50%;
    background: #ffdfe5;
    display: flex;
    align-items: center;
    justify-content: center;
}
.url {
    margin-left: 8px;
    width: 585px;
    font-size: 14px;
    letter-spacing: -0.3px;
    color: #6b5b5f;
}
.url b {
    font-weight: normal;
    color: #241c1e;
}
.extensions {
    display: flex;
    margin-left: 8px;
}
.ext {
    width: 36px;
    display: flex;
    align-items: center;
    justify-content: center;
}
.ext svg {
    width: 16px;
    height: 16px;
}
.ext svg.puzzle {
    width: 18px;
    height: 18px;
}
.divider {
    width: 2px;
    height: 16px;
    background: #ffadbc;
}
.toolbar .divider {
    margin: 0 8px;
}
.profile {
    width: 86px;
    height: 34px;
    margin: 0 12px 0 4px;
    padding-left: 9px;
    border: 1px solid #cbb6c6;
    border-radius: 17px;
    background: #ecd4e0;
    display: flex;
    align-items: center;
    gap: 6px;
}
.avatar-small {
    width: 20px;
    height: 20px;
    border-radius: 50%;
    background: #c0350f;
    color: #fff;
    line-height: 20px;
    text-align: center;
}
.paused {
    color: #2a50a8;
    letter-spacing: -0.6px;
}
.bookmarks {
    display: flex;
    align-items: center;
    height: 28px;
    padding-left: 12px;
}
.bookmark {
    width: 149.500px;
    display: flex;
    align-items: center;
    gap: 6px;
}
.bookmark svg {
    width: 16px;
    height: 16px;
}
.bookmark span {
    letter-spacing: -0.38px;
}
.w82 {
    width: 82px;
}
.w144 {
    width: 144px;
}
.w131 {
    width: 131px;
}
.bookmarks-end {
    margin-left: auto;
    padding-right: 14px;
    display: flex;
    align-items: center;
}
.bookmarks-end .divider {
    margin: 0 16px;
}
.all-bookmarks {
    margin-left: 9px;
    letter-spacing: -0.35px;
}

/* Gmail */
.gmail {
    flex: 1;
    min-height: 0;
    background: #f6f8fc;
    display: flex;
    flex-direction: column;
    position: relative;
}
header {
    flex: 0 0 64px;
    display: flex;
    align-items: center;
}
.brand {
    width: 256px;
    padding-left: 27px;
    display: flex;
    align-items: center;
}
.hamburger {
    margin-right: 20px;
}
.brand-name {
    margin-left: 11px;
    padding-bottom: 1px;
    font-size: 22px;
    letter-spacing: -0.5px;
}
.search {
    width: 720px;
    height: 48px;
    border-radius: 24px;
    background: #e9f1fb;
    display: flex;
    align-items: center;
    padding: 0 16px 2px 12px;
}
.search-text {
    flex: 1;
    margin-left: 8px;
    padding-bottom: 1px;
    font-size: 15.5px;
    letter-spacing: -0.05px;
    color: #5c605f;
}
.header-icons {
    margin-left: auto;
    padding-right: 14px;
    display: flex;
    align-items: center;
    gap: 20px;
}
.account {
    width: 32px;
    height: 32px;
    border: 1px solid #d3def0;
    border-radius: 50%;
    background: #e6eefc;
    color: #1f70f0;
    font-size: 21px;
    font-weight: 300;
    line-height: 31px;
    text-align: center;
    position: relative;
}
.key {
    position: absolute;
    right: -3px;
    bottom: -1px;
    width: 14px;
    height: 14px;
    border-radius: 50%;
    background: #fff;
    box-shadow: 0 1px 2px rgba(0, 0, 0, 0.4);
    display: flex;
    align-items: center;
    justify-content: center;
}
.content {
    flex: 1;
    min-height: 0;
    display: flex;
}
.sidebar {
    width: 256px;
    overflow: hidden;
    padding-top: 8px;
    letter-spacing: -0.05px;
}
.compose {
    width: 142px;
    height: 56px;
    margin: 0 0 16px 8px;
    padding-left: 16px;
    border-radius: 16px;
    background: #c2e7ff;
    color: #001d35;
    font-weight: 500;
    letter-spacing: 0.1px;
    display: flex;
    align-items: center;
    gap: 16px;
}
.nav-item {
    width: 240px;
    height: 32px;
    padding-left: 26px;
    border-radius: 0 16px 16px 0;
    display: flex;
    align-items: center;
    gap: 18px;
}
.nav-item.selected {
    background: #d3e3fd;
    color: #001d35;
    font-weight: 600;
    letter-spacing: 0.3px;
}
.nav-item.label {
    padding-left: 28px;
    gap: 20px;
}
.labels-title {
    height: 60px;
    padding: 15px 28px 0 26px;
    display: flex;
    align-items: flex-start;
    justify-content: space-between;
    font-size: 15.5px;
    letter-spacing: 0.25px;
    line-height: 46px;
    color: #1f1f1f;
}
.labels-title svg {
    margin-top: 17px;
    color: #444746;
}
main {
    width: 1110px;
    height: 527px;
    background: #fff;
    border-radius: 16px;
    display: flex;
    flex-direction: column;
}
.mail-toolbar {
    height: 48px;
    padding-left: 19px;
    display: flex;
    align-items: center;
}
.drop {
    margin-left: 9px;
}
.refresh {
    margin: 0 20px 0 26px;
}
.categories {
    width: 1094px;
    height: 56px;
    padding-left: 8px;
    border-bottom: 1px solid #eceff1;
    display: flex;
}
.category {
    width: 253px;
    height: 56px;
    padding-left: 8px;
    display: flex;
    align-items: center;
    gap: 16px;
    font-weight: 500;
    letter-spacing: 0.15px;
}
.category.current {
    width: 235px;
    margin-right: 18px;
    border-bottom: 3px solid #0b57d0;
    border-radius: 3px 3px 0 0;
    padding-top: 3px;
    color: #0b57d0;
}
.empty {
    padding: 79px 0 0 272px;
    color: #5e6261;
    letter-spacing: -0.04px;
}
.empty p {
    margin: 0;
    line-height: 22px;
}
.empty-title {
    font-size: 15.5px;
    letter-spacing: -0.16px;
}
.empty .empty-desc {
    margin: 13px 0;
}
.empty a {
    color: #2a52be;
}
footer {
    margin-top: 110px;
    padding-left: 16px;
    display: flex;
    font-size: 11.5px;
    color: #5e6261;
}
.storage {
    width: 220px;
    padding-top: 7px;
}
.bar {
    height: 6px;
    border-radius: 3px;
    background: #dadce0;
}
.quota {
    margin-top: 9px;
    display: flex;
    align-items: flex-start;
    gap: 10px;
    letter-spacing: 0.04px;
}
.quota span {
    padding-top: 2px;
}
.policies {
    margin-left: 220px;
    padding-top: 3px;
    letter-spacing: -0.08px;
}
.toast {
    position: absolute;
    left: 24px;
    top: 531px;
    width: 416px;
    height: 52px;
    padding: 0 20px 0 24px;
    border-radius: 4px;
    background: #202124;
    box-shadow: 0 3px 8px rgba(60, 64, 67, 0.35);
    color: #fff;
    font-weight: 500;
    letter-spacing: -0.15px;
    display: flex;
    align-items: center;
}
.toast svg {
    margin-left: auto;
    color: #c8cacd;
}
.toast-text {
    width: 297px;
}
.undo {
    color: #8ab4f8;
    letter-spacing: 0.1px;
}

/* Taskbar */
.taskbar {
    flex: 0 0 40px;
    background: #1e1e1e;
    color: #fff;
    font-family: "Open Sans", "Noto Sans", sans-serif;
    display: flex;
}
.start {
    width: 48px;
    display: flex;
    align-items: center;
    justify-content: center;
}
.task-search {
    width: 288px;
    padding: 0 3px 0 11px;
    background: #f1f1f1;
    border: 1px solid #c2c2c2;
    color: #3a3a3a;
    display: flex;
    align-items: center;
    gap: 11px;
    font-size: 15px;
    letter-spacing: -0.5px;
}
.highlight {
    margin-left: auto;
}
.task {
    width: 49px;
    display: flex;
    align-items: center;
    justify-content: center;
}
.task.first {
    width: 50px;
    padding-right: 2px;
}
.task.open {
    width: 40px;
    margin: 0 4px 0 5px;
    border-bottom: 2px solid #76b9ed;
    padding-top: 2px;
}
.task.active {
    width: 48px;
    margin-left: 1px;
    background: #4d4d4d;
    border-bottom: 2px solid #76b9ed;
    padding: 2px 0 0 2px;
}
.tray {
    margin-left: auto;
    width: 346px;
    display: flex;
    align-items: center;
}
.weather-text {
    width: 55px;
    margin-left: 10px;
    font-size: 14px;
    letter-spacing: -0.3px;
}
.tray-icon {
    width: 24px;
    display: flex;
    justify-content: center;
}
.clock {
    width: 65px;
    display: flex;
    flex-direction: column;
    align-items: center;
    font-size: 12px;
    line-height: 18px;
    letter-spacing: -0.4px;
}
.action {
    margin: 0 20px 0 11px;
}
.show-desktop {
    width: 5px;
    height: 40px;
    border-left: 1px solid #777;
}
```
